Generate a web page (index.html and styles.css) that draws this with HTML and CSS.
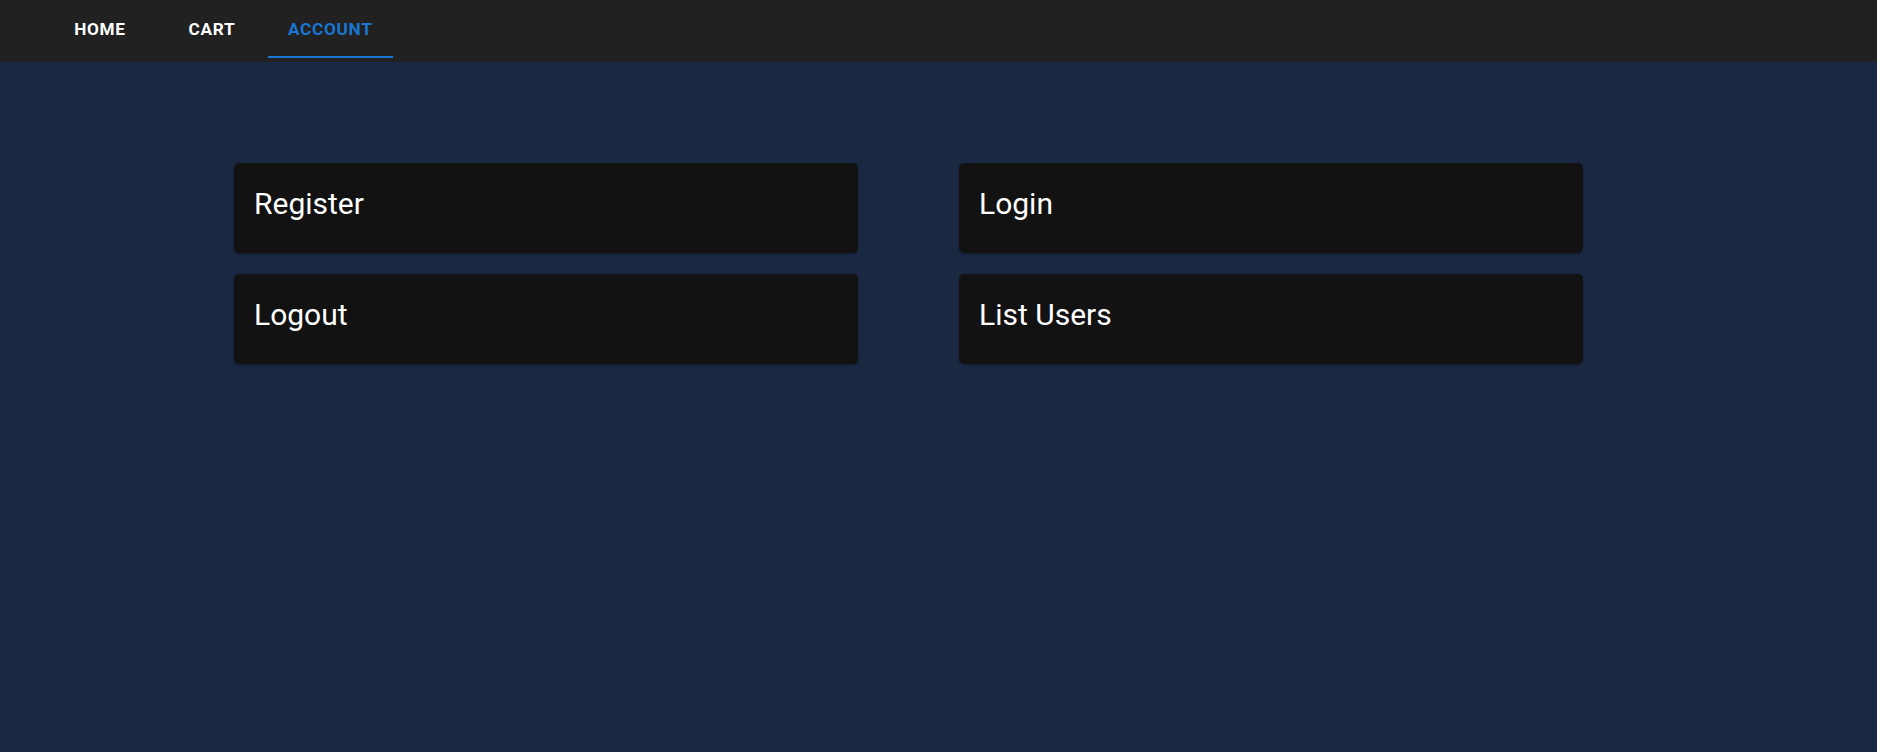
FILE: index.html
```html
<!DOCTYPE html>
<html lang="en">
<head>
<meta charset="utf-8">
<title>Account</title>
<link rel="stylesheet" href="styles.css">
</head>
<body>
<header class="topbar">
  <nav class="tabs">
    <a class="tab" href="#">Home</a>
    <a class="tab" href="#">Cart</a>
    <a class="tab tab-active" href="#">Account</a>
  </nav>
</header>
<main class="content">
  <div class="card-grid">
    <div class="card"><div class="card-title">Register</div></div>
    <div class="card"><div class="card-title">Login</div></div>
    <div class="card"><div class="card-title">Logout</div></div>
    <div class="card"><div class="card-title">List Users</div></div>
  </div>
</main>
</body>
</html>
```
FILE: styles.css
```css
* { box-sizing: border-box; }
html, body {
  margin: 0;
  height: 100%;
}
body {
  background: #1a2842;
  font-family: Roboto, "Liberation Sans", sans-serif;
  color: #ffffff;
  display: flex;
  flex-direction: column;
}
.topbar {
  height: 62px;
  background: #212121;
  padding-left: 44px;
  flex: none;
}
.tabs {
  display: flex;
  height: 58px;
}
.tab {
  min-width: 112px;
  padding: 0 20px;
  display: flex;
  align-items: center;
  justify-content: center;
  color: #ffffff;
  text-decoration: none;
  text-transform: uppercase;
  font-size: 17.2px;
  font-weight: 700;
  letter-spacing: 0.7px;
  border-bottom: 2px solid transparent;
  padding-top: 2px;
}
.tab-active {
  color: #1976d2;
  border-bottom-color: #1976d2;
}
.content {
  flex: 1;
  padding: 101px 0 0 234px;
}
.card-grid {
  display: grid;
  grid-template-columns: 624px 624px;
  column-gap: 101px;
  row-gap: 21px;
}
.card {
  background: #121212;
  border-radius: 5px;
  height: 90px;
  padding: 21px 20px;
  box-shadow: 0 2px 2px -1px rgba(0,0,0,0.2), 0 1px 3px 0 rgba(0,0,0,0.12);
}
.card-title {
  font-size: 30px;
  line-height: 40px;
  font-weight: 400;
  color: #ffffff;
}
```
